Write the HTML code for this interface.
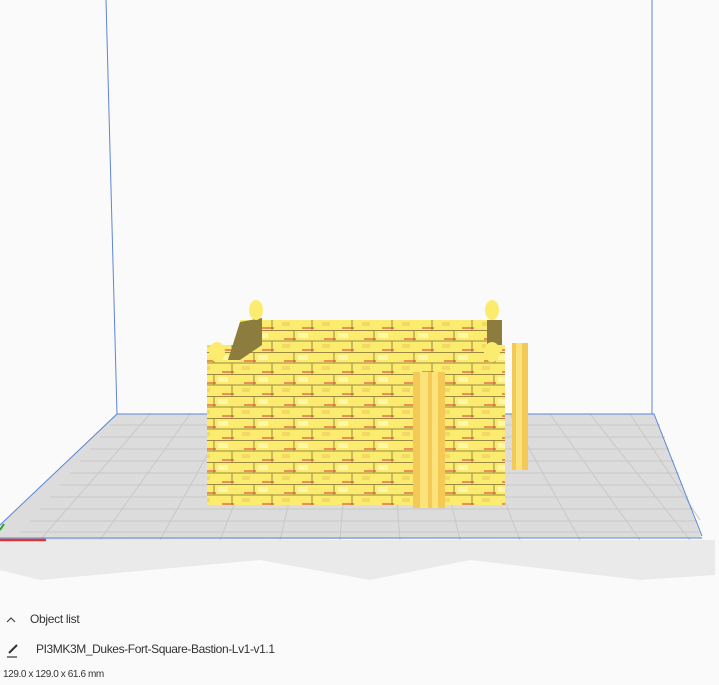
<!DOCTYPE html>
<html><head><meta charset="utf-8"><style>
html,body{margin:0;padding:0;background:#fafafa;width:719px;height:685px;overflow:hidden;font-family:"Liberation Sans",sans-serif;}
.t{position:absolute;color:#333;font-size:12px;}
</style></head><body>
<svg width="719" height="685" style="position:absolute;left:0;top:0">
<defs>
<pattern id="st" width="40" height="22" patternUnits="userSpaceOnUse">
<rect width="40" height="22" fill="#fbec70"/>
<path d="M0 0.5H40M0 11H40M14 0V11M32 11V22" stroke="#9a8740" stroke-width="1" fill="none"/>
<path d="M4 9H16M22 20H34" stroke="#d33" stroke-width="1"/>
<rect x="18" y="3" width="10" height="5" fill="#fff6a8"/>
<rect x="2" y="14" width="8" height="4" fill="#f2d865"/>
</pattern>
</defs>
<polygon points="0,540 715,540 715,575 640,580 470,560 370,580 260,560 40,580 0,570" fill="#eaeaea"/>
<polygon points="116,414 654,414 702,538 0,540 0,525" fill="#dcdcdc"/>
<g stroke="#c8c8c8" stroke-width="1">
<path d="M110 425H660M100 437H665M90 449H669M80 461H674M70 473H679M60 485H683M50 497H688M40 509H693M30 521H697M20 532H700"/>
<path d="M150 414L40 540M190 414L100 540M230 414L160 540M270 414L220 540M310 414L280 540M350 414L340 540M390 414L400 540M430 414L460 540M470 414L520 540M510 414L580 540M550 414L640 540M590 414L690 540M630 414L700 520"/>
</g>
<path d="M106 0L117 414H654L702 536M652 0V414M0 538H702" stroke="#5b86d6" stroke-width="1" fill="none"/>
<path d="M117 414L0 525" stroke="#5b86d6" stroke-width="1"/>
<path d="M0 540H46" stroke="#d33" stroke-width="2.5"/>
<path d="M0 530L4 524" stroke="#2a2" stroke-width="2"/>
<polygon points="240,320 500,320 500,345 505,345 505,505 207,505 207,345 240,345" fill="url(#st)"/>
<polygon points="240,322 262,318 262,345 240,360 228,360" fill="#8c7d3e"/>
<polygon points="487,320 502,320 502,345 487,345" fill="#8c7d3e"/>
<ellipse cx="256" cy="310" rx="7" ry="10" fill="#fbec70"/>
<ellipse cx="492" cy="310" rx="7" ry="10" fill="#fbec70"/>
<ellipse cx="217" cy="352" rx="8" ry="10" fill="#fbec70"/>
<ellipse cx="492" cy="352" rx="8" ry="10" fill="#fbec70"/>
<rect x="413" y="372" width="32" height="136" fill="#f5c956"/>
<rect x="420" y="372" width="8" height="136" fill="#fbe27a"/>
<rect x="432" y="372" width="6" height="136" fill="#fbe27a"/>
<rect x="512" y="343" width="16" height="127" fill="#f5c956"/>
<rect x="516" y="343" width="6" height="127" fill="#fbe27a"/>
<path d="M7 622L11 618L15 622" stroke="#444" stroke-width="1.2" fill="none"/>
<path d="M9 653L17 645" stroke="#333" stroke-width="2"/>
<path d="M7 657H17" stroke="#333" stroke-width="1.2"/>
</svg>
<div class="t" style="left:30px;top:612px;letter-spacing:-0.3px">Object list</div>
<div class="t" style="left:36px;top:642px;letter-spacing:-0.4px">PI3MK3M_Dukes-Fort-Square-Bastion-Lv1-v1.1</div>
<div class="t" style="left:3px;top:669px;font-size:10px;letter-spacing:-0.4px">129.0 x 129.0 x 61.6 mm</div>
</body></html>
